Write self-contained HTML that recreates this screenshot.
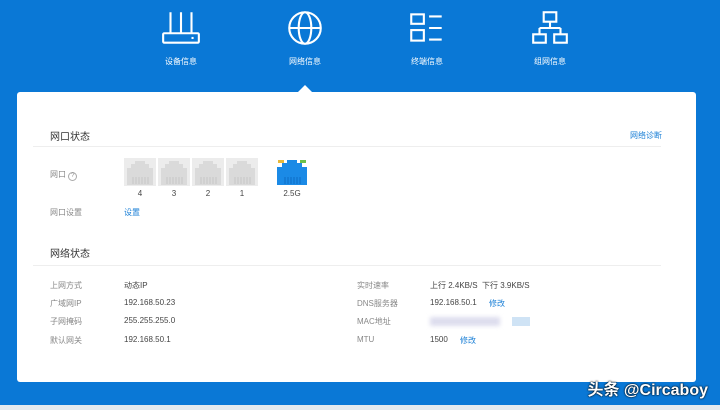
<!DOCTYPE html>
<html><head><meta charset="utf-8"><style>
*{margin:0;padding:0;box-sizing:border-box}
body{width:720px;height:410px;overflow:hidden;background:#0a78d6;font-family:"Liberation Sans","Noto Sans CJK SC",sans-serif;position:relative}
.nav{position:absolute;top:0;left:0;width:720px;height:92px}
.it{position:absolute;top:9px;width:100px;text-align:center;color:#fff;font-size:8px}
.it svg{display:block;margin:0 auto 9px}
.card{position:absolute;left:17px;top:92px;width:679px;height:290px;background:#fff;border-radius:3px}
.tri{position:absolute;left:297px;top:85px;width:0;height:0;border-left:8px solid transparent;border-right:8px solid transparent;border-bottom:8px solid #fff}
.t{position:absolute;font-size:10px;color:#333}
.l{position:absolute;font-size:8px;color:#888}
.v{position:absolute;font-size:8px;color:#444}
.a{position:absolute;font-size:8px;color:#1a7fd6}
.hr{position:absolute;left:33px;width:628px;height:1px;background:#eee}
.port{position:absolute;top:158px;width:32px;height:28px}
.pn{position:absolute;top:189px;font-size:8px;color:#444;width:32px;text-align:center}
</style></head><body>
<div class="nav">
<div class="it" style="left:131px"><svg width="42" height="38" viewBox="0 0 40 36" fill="none" stroke="#fff" stroke-width="2"><path d="M10 3v20M20 3v20M30 3v20"/><rect x="3" y="23" width="34" height="9" rx="1"/><path d="M30 27.5h2"/></svg>设备信息</div>
<div class="it" style="left:255px"><svg width="42" height="38" viewBox="0 0 40 36" fill="none" stroke="#fff" stroke-width="2"><circle cx="20" cy="18" r="15"/><ellipse cx="20" cy="18" rx="6" ry="15"/><path d="M5 18h30"/></svg>网络信息</div>
<div class="it" style="left:377px"><svg width="42" height="38" viewBox="0 0 40 36" fill="none" stroke="#fff" stroke-width="2"><rect x="5" y="5" width="12" height="9"/><rect x="5" y="20" width="12" height="10"/><path d="M22 7h12M22 18h12M22 29h12"/></svg>终端信息</div>
<div class="it" style="left:500px"><svg width="42" height="38" viewBox="0 0 40 36" fill="none" stroke="#fff" stroke-width="2"><rect x="14" y="3" width="12" height="9"/><path d="M20 12v6M10 18h20M10 18v6M30 18v6"/><rect x="4" y="24" width="12" height="8"/><rect x="24" y="24" width="12" height="8"/></svg>组网信息</div>
</div>
<div class="tri"></div>
<div class="card"></div>
<div class="t" style="left:50px;top:128px">网口状态</div>
<div class="a" style="left:630px;top:130px">网络诊断</div>
<div class="hr" style="top:146px"></div>
<div class="l" style="left:50px;top:169px">网口 <span style="display:inline-block;width:9px;height:9px;border:1px solid #aaa;border-radius:50%;font-size:6px;text-align:center;line-height:7px">?</span></div>
<svg width="0" height="0" style="position:absolute"><defs>
<g id="pg"><rect x="0" y="0" width="32" height="28" fill="#ececec"/><path d="M3 27V10h4V6h4V3h10v3h4v4h4v17z" fill="#dadada"/><path d="M9 19v7M12 19v7M15 19v7M18 19v7M21 19v7M24 19v7" stroke="#c6c6c6" stroke-width="1"/></g>
</defs></svg>
<svg class="port" style="left:124px" viewBox="0 0 32 28"><use href="#pg"/></svg><div class="pn" style="left:124px">4</div>
<svg class="port" style="left:158px" viewBox="0 0 32 28"><use href="#pg"/></svg><div class="pn" style="left:158px">3</div>
<svg class="port" style="left:192px" viewBox="0 0 32 28"><use href="#pg"/></svg><div class="pn" style="left:192px">2</div>
<svg class="port" style="left:226px" viewBox="0 0 32 28"><use href="#pg"/></svg><div class="pn" style="left:226px">1</div>
<svg class="port" style="left:276px" viewBox="0 0 32 28"><path d="M1 27V9h5V5h5V2h10v3h5v4h5v18z" fill="#1b8ae6"/><rect x="2" y="2" width="6" height="3" fill="#e8b93a"/><rect x="24" y="2" width="6" height="3" fill="#6cc04a"/><path d="M9 19v7M12 19v7M15 19v7M18 19v7M21 19v7M24 19v7" stroke="#0c6cc4" stroke-width="1"/></svg><div class="pn" style="left:276px">2.5G</div>
<div class="l" style="left:50px;top:207px">网口设置</div>
<div class="a" style="left:124px;top:207px">设置</div>
<div class="t" style="left:50px;top:245px">网络状态</div>
<div class="hr" style="top:265px"></div>
<div class="l" style="left:50px;top:280px">上网方式</div><div class="v" style="left:124px;top:280px">动态IP</div>
<div class="l" style="left:50px;top:298px">广域网IP</div><div class="v" style="left:124px;top:298px">192.168.50.23</div>
<div class="l" style="left:50px;top:316px">子网掩码</div><div class="v" style="left:124px;top:316px">255.255.255.0</div>
<div class="l" style="left:50px;top:335px">默认网关</div><div class="v" style="left:124px;top:335px">192.168.50.1</div>
<div class="l" style="left:357px;top:280px">实时速率</div><div class="v" style="left:430px;top:280px">上行 2.4KB/S &nbsp;下行 3.9KB/S</div>
<div class="l" style="left:357px;top:298px">DNS服务器</div><div class="v" style="left:430px;top:298px">192.168.50.1</div><div class="a" style="left:489px;top:298px">修改</div>
<div class="l" style="left:357px;top:316px">MAC地址</div><div style="position:absolute;left:430px;top:317px;width:70px;height:9px;background:#dde;filter:blur(2px)"></div><div style="position:absolute;left:512px;top:317px;width:18px;height:9px;background:#cfe3f5"></div>
<div class="l" style="left:357px;top:335px">MTU</div><div class="v" style="left:430px;top:335px">1500</div><div class="a" style="left:460px;top:335px">修改</div>
<div style="position:absolute;right:12px;top:376px;color:#fff;font-size:16px;font-weight:bold;text-shadow:0 0 2px #000,0 0 1px #000">头条 @Circaboy</div>
<div style="position:absolute;left:0;top:405px;width:720px;height:5px;background:#e4eaef"></div>
</body></html>
